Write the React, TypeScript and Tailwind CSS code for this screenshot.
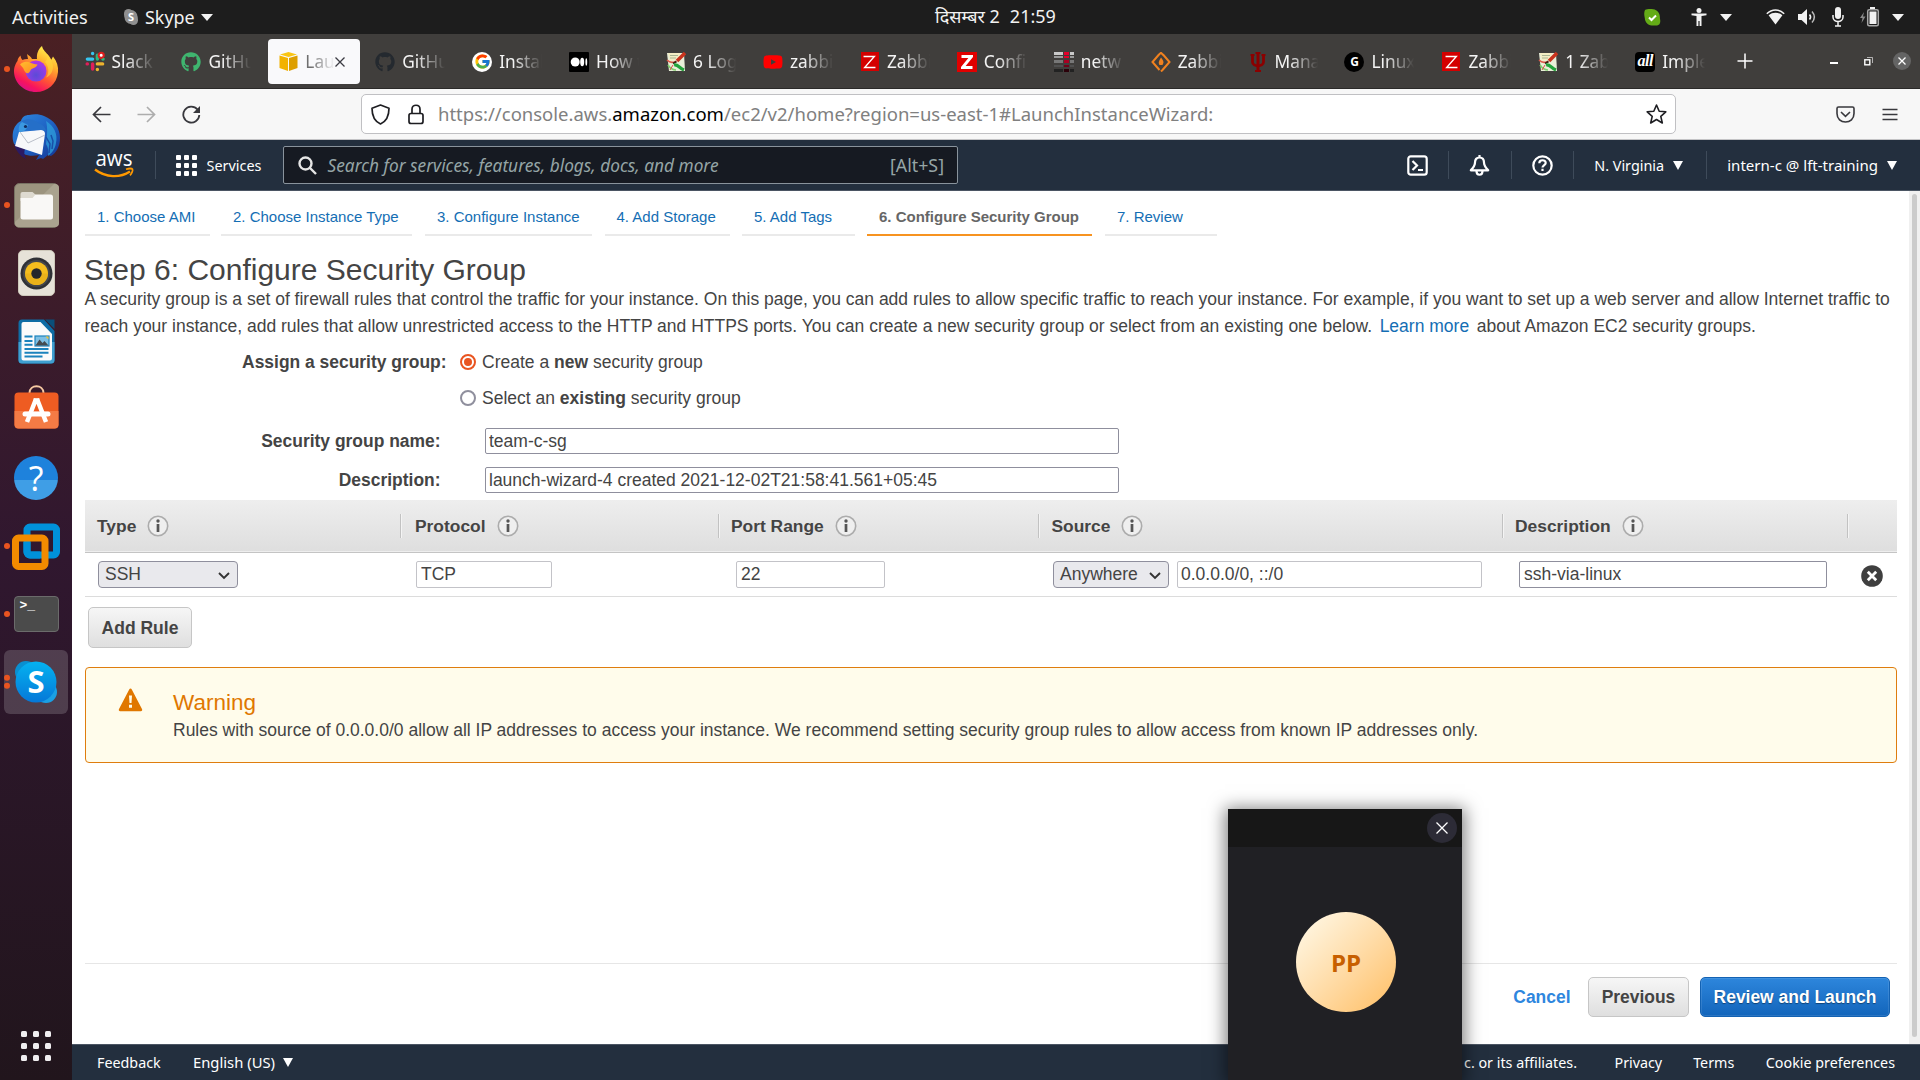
import React from "react";
import { FaGithub, FaYoutube } from "react-icons/fa";
import { FcGoogle } from "react-icons/fc";

type Kids = { children?: React.ReactNode };

/* ---------- shared bits ---------- */

function Caret({ w = 12, h = 7, className = "" }: { w?: number; h?: number; className?: string }) {
  return (
    <svg width={w} height={h} viewBox="0 0 12 7" preserveAspectRatio="none" className={`shrink-0 ${className}`}>
      <path d="M0 0h12L6 7z" fill="currentColor" />
    </svg>
  );
}

/* ---------- GNOME top bar ---------- */

function TopBar() {
  return (
    <header className="grid h-[34px] shrink-0 grid-cols-[935px_1fr_auto] items-center bg-[#1d1d1d] text-[18.2px] leading-[34px] text-[#f2f2f2]">
      <div className="flex items-center pl-3">
        <span className="w-[112px]">Activities</span>
        <svg width="14" height="16" viewBox="0 0 14 16" className="shrink-0">
          <rect x="0" y="0" width="9" height="10" rx="4.5" fill="#8f8f8f" />
          <rect x="5" y="6" width="9" height="10" rx="4.5" fill="#8f8f8f" />
          <rect x="0.5" y="1" width="13" height="14" rx="6.5" fill="#8f8f8f" />
          <text x="7" y="12" textAnchor="middle" fontSize="11" fontWeight="700" fill="#fff" fontFamily="Noto Sans, sans-serif">S</text>
        </svg>
        <span className="ml-[7px] text-[17.900px]">Skype</span>
        <Caret className="ml-[6px]" />
      </div>
      <div className="flex -translate-y-px gap-[10px] whitespace-pre text-[18px]">
        <span>दिसम्बर 2</span>
        <span>21:59</span>
      </div>
      <div className="flex items-center pr-4">
        <svg width="17" height="17" viewBox="0 0 17 17">
          <path d="M1 1C3.500-.2 9-.2 12 1.200c3.500 1.800 4 5.300 4 8.800.5 2 .4 4-.8 5.500-2 1.500-5 1-7.500 1C3.500 16 1 13 .8 9 0 6 0 3 1 1z" fill="#64ab17" />
          <path d="M5 8.500l2.500 2.500 4.500-4.500" fill="none" stroke="#fff" strokeWidth="2" />
        </svg>
        <svg width="16" height="18" viewBox="0 0 16 18" className="ml-[30px]" fill="#f2f2f2">
          <circle cx="8" cy="2.600" r="2.500" />
          <path d="M.5 5.500h15v1.700L10.500 8v10H8.600v-5H7.400v5H5.500V8L.5 7.200z" />
        </svg>
        <Caret className="ml-[13px]" />
        <svg width="19" height="16" viewBox="0 0 19 16" className="ml-[34px]" fill="none">
          <path d="M.8 4.800C6-.4 13-.4 18.200 4.800" stroke="#f2f2f2" strokeWidth="1.500" />
          <path d="M2.600 6.300C6.500 3 12.500 3 16.400 6.300L9.500 15.500z" fill="#f2f2f2" />
        </svg>
        <svg width="20" height="18" viewBox="0 0 20 18" className="ml-[13px]" fill="none" stroke="#f2f2f2">
          <path d="M0 6h3.500L9 1v16l-5.500-5H0z" fill="#f2f2f2" stroke="none" />
          <path d="M11.500 6.500c1.300 1.500 1.300 3.500 0 5" strokeWidth="1.600" />
          <path d="M14 3.500c3 3.500 3 7.500 0 11" strokeWidth="1.500" opacity=".75" />
        </svg>
        <svg width="12" height="20" viewBox="0 0 12 20" className="ml-[14px]" fill="none" stroke="#f2f2f2">
          <rect x="3" y="0" width="6" height="12" rx="3" fill="#f2f2f2" stroke="none" />
          <path d="M1 8v2c0 6 10 6 10 0V8M6 14.500V19M3 19h6" strokeWidth="1.500" />
        </svg>
        <svg width="20" height="20" viewBox="0 0 20 20" className="ml-[16px]">
          <path d="M4 5L0 11h2.500L1.500 16 5.500 9.500H3z" fill="#8a8a8a" />
          <path d="M10 0h5v2h-5z" fill="#f2f2f2" />
          <rect x="7.700" y="2.700" width="10.600" height="16" rx="1.500" fill="none" stroke="#a8a8a8" strokeWidth="1.500" />
          <rect x="9.500" y="4.500" width="7" height="12.500" fill="#f2f2f2" />
        </svg>
        <Caret className="ml-[12px]" />
      </div>
    </header>
  );
}

/* ---------- Dock ---------- */

function DockSlot({ dots = 0, active = false, children }: Kids & { dots?: number; active?: boolean }) {
  return (
    <div className="relative flex h-[68.1px] w-[72px] items-center justify-center">
      {active && <div className="absolute inset-x-1 inset-y-[2px] rounded-md bg-white/[0.17]" />}
      <div className="absolute left-1 top-1/2 flex -translate-y-1/2 flex-col gap-[2.500px]">
        {Array.from({ length: dots }, (_, i) => (
          <span key={i} className="size-[6px] rounded-full bg-[#e95420]" />
        ))}
      </div>
      <div className="relative flex items-center justify-center">{children}</div>
    </div>
  );
}

function FirefoxIcon() {
  return (
    <svg width="48" height="48" viewBox="0 0 48 48">
      <defs>
        <linearGradient id="ffBody" x1=".8" y1=".05" x2=".3" y2="1">
          <stop offset="0" stopColor="#fff44f" />
          <stop offset=".3" stopColor="#ffb22e" />
          <stop offset=".6" stopColor="#ff5634" />
          <stop offset=".85" stopColor="#f7135f" />
          <stop offset="1" stopColor="#d9108a" />
        </linearGradient>
        <radialGradient id="ffGlobe" cx=".5" cy=".7" r=".7">
          <stop offset="0" stopColor="#5b4bd6" />
          <stop offset=".6" stopColor="#8a3fe6" />
          <stop offset="1" stopColor="#b833e1" />
        </radialGradient>
        <linearGradient id="ffHead" x1="0" y1="0" x2="1" y2="1">
          <stop offset="0" stopColor="#ffbd2e" />
          <stop offset="1" stopColor="#ff8a1f" />
        </linearGradient>
      </defs>
      <path d="M8.500 10.500c.3 2 1 3.500 2 4.500 1.500-.8 3.500-1.200 5.500-1l-1-5c2 1.500 4 3 5 5h5c-.5-5 1-9.500 5-13 1 4.500 4 6 7 10 1 1.300 1.800 2.500 2.300 3.800L41 11.500c4 5 5.500 10 5 15.500C45 39 35.500 47 24 47S2.500 38.500 2 27c-.2-5 2-9 3.500-11 0-2 1.500-4 3-5.500z" fill="url(#ffBody)" />
      <circle cx="24" cy="26" r="10.500" fill="url(#ffGlobe)" />
      <path d="M8 19.500c3-3 7-3.500 11-1.500 2 1 4.500 1 6.500 1.500-1 3-4 3.500-6 4.500-1.500 1-1 3-3 4-2 .8-3.500-.5-4.500-3-.8-2.500-2.500-4-4-5.500z" fill="url(#ffHead)" />
      <path d="M33 17c4 4.500 4.500 11 1 15.500 6-2.500 8.500-9 6-15.500-1-3-3.500-5-5-7 .5 3 0 5-2 7z" fill="#ffd53a" opacity=".65" />
    </svg>
  );
}

function ThunderbirdIcon() {
  return (
    <svg width="48" height="48" viewBox="0 0 48 48">
      <defs>
        <linearGradient id="tbBody" x1="0" y1="0" x2="1" y2="1">
          <stop offset="0" stopColor="#2f8ae0" />
          <stop offset=".5" stopColor="#1f63c4" />
          <stop offset="1" stopColor="#13318f" />
        </linearGradient>
      </defs>
      <path d="M17 2c5-1.500 11-1 15 1 10 4 16 12 16 22 0 9-4 15-9 18l-3-1-5 4-2-1-5 2 3-5c-9 2-17 0-22-6-4-5-5-11-4-17 1-5 4-9 8-11 1-4 4-6 8-6z" fill="url(#tbBody)" />
      <path d="M34 8c8 5 12 13 10 22-1 6-4 10-8 13 1-5 0-9-2-12 1-8 2-15 0-23z" fill="#2fa0dc" opacity=".75" />
      <path d="M34 24l4 7-1 9M39 22l2 6-1 8" stroke="#184fa8" strokeWidth="1.500" fill="none" />
      <path d="M2 31c2 7 6 12 12 15-2-4-2-7-1-10z" fill="#2b1a63" />
      <path d="M7 19l22-2c3 0 4 2 4 4l-3 21L3 33z" fill="#f7f8fa" />
      <path d="M8 19l8 11 17-8" fill="none" stroke="#b9bec8" strokeWidth="1" />
      <path d="M10 8c5-3 11-2 15 1 5 3 8 4 9 9-6-2-11 0-16-1-4 0-6-1-8-3-1-2-1-4 0-6z" fill="#256fc8" />
      <path d="M10 9c-3 2-4 7-3 10 4 0 8-2 9-7z" fill="#3b98e0" />
      <circle cx="13.500" cy="13.500" r="1.600" fill="#122a5f" />
    </svg>
  );
}

function FilesIcon() {
  return (
    <svg width="45" height="45" viewBox="0 0 45 45">
      <rect x=".5" y=".5" width="44" height="44" rx="5" fill="#9c947f" stroke="#787263" />
      <path d="M1 39L40 1h1a4 4 0 014 4v35a4 4 0 01-4 4H5a4 4 0 01-4-4z" fill="#aaa38f" />
      <path d="M6.500 11a2 2 0 012-2h10l3.500 3v6H6.500z" fill="#dedad0" />
      <path d="M6.500 15h12l3-3.500h15a2.500 2.500 0 012.500 2.500v20a2.500 2.500 0 01-2.500 2.500H9A2.500 2.500 0 016.500 34z" fill="#f9f8f6" />
    </svg>
  );
}

function RhythmboxIcon() {
  return (
    <svg width="37" height="46" viewBox="0 0 37 46">
      <rect x=".5" y=".5" width="36" height="45" rx="4.500" fill="#e6e2d8" stroke="#cdc8ba" />
      <circle cx="18.500" cy="23.500" r="16" fill="#2f3136" />
      <circle cx="18.500" cy="23.500" r="13.500" fill="#44474d" />
      <circle cx="18.500" cy="23.500" r="11.500" fill="#f4bd1e" />
      <path d="M7 23.500h23a11.500 11.500 0 01-23 0z" fill="#e0a815" opacity=".5" />
      <circle cx="18.500" cy="23.500" r="5.200" fill="#26272b" />
    </svg>
  );
}

function WriterIcon() {
  return (
    <svg width="37" height="45" viewBox="0 0 37 45">
      <path d="M4 .5h22L36.500 12v29a3.500 3.500 0 01-3.500 3.500H4A3.500 3.500 0 01.5 41V4A3.500 3.500 0 014 .5z" fill="#0f6da5" />
      <path d="M.5 23h36v18a3.500 3.500 0 01-3.500 3.500H4A3.500 3.500 0 01.5 41z" fill="#3f9fd0" />
      <path d="M27 .5h9.500v9.500z" fill="#0a4f7a" />
      <path d="M5.500 3h17L34 15v24.500a2 2 0 01-2 2H5.500a2 2 0 01-2-2V5a2 2 0 012-2z" fill="#fbfbfb" />
      <path d="M6.500 17.500h8M6.500 22h8M6.500 25.800h8M6.500 30h24M6.500 33.800h24M6.500 37.500h18" stroke="#1b83bd" strokeWidth="1.900" />
      <rect x="17" y="17" width="14" height="10" fill="#7ec0e4" stroke="#1b83bd" strokeWidth="1.200" />
      <path d="M17.500 26.500l4-6 3 3.500 2-2 4 4.500z" fill="#444b50" />
      <path d="M27.500 17.500h3v3z" fill="#f6c22d" />
    </svg>
  );
}

function SoftwareIcon() {
  return (
    <svg width="45" height="44" viewBox="0 0 45 44" className="-translate-y-[3px]">
      <path d="M15.500 9V8c0-9 14-9 14 0v1" fill="none" stroke="#f6c9a2" strokeWidth="2" />
      <rect x=".5" y="7.500" width="44" height="36" rx="4" fill="#ee5c22" />
      <path d="M.5 26h44v13.500a4 4 0 01-4 4h-36a4 4 0 01-4-4z" fill="#f47b45" />
      <path d="M22 14L13 37M23 14l9 23" stroke="#fff" strokeWidth="4.500" fill="none" />
      <rect x="8.500" y="26.500" width="28" height="5" rx="2.500" fill="#fff" />
      <path d="M19.700 13.200h5.600v4h-5.600z" fill="#fff" />
    </svg>
  );
}

function HelpIcon() {
  return (
    <div className="flex size-11 items-center justify-center rounded-full bg-gradient-to-b from-[#1e82dc] from-55% to-[#3f9ee6] to-55% font-['Open_Sans',sans-serif] text-[34px] leading-[44px] text-white">
      ?
    </div>
  );
}

function VmwareIcon() {
  return (
    <svg width="48" height="48" viewBox="0 0 48 48" fill="none" strokeWidth="7">
      <rect x="15" y="5" width="29.500" height="28" rx="3" stroke="#0091da" />
      <rect x="3.500" y="16" width="29.500" height="28.500" rx="3" stroke="#f38b00" />
      <path d="M15 20v10a3 3 0 003 3h10" stroke="#0091da" />
    </svg>
  );
}

function TerminalIcon() {
  return (
    <div className="flex h-9 w-[45px] items-start rounded-[4px] border border-[#6b6b6b] bg-[#4b4b4b] pl-[5px] pt-px font-['Liberation_Mono',monospace] text-[13px] font-bold leading-[15px] text-white">
      &gt;_
    </div>
  );
}

function SkypeIcon() {
  return (
    <svg width="44" height="44" viewBox="0 0 44 44">
      <defs>
        <linearGradient id="skBg" x1="0" y1="0" x2="0" y2="1">
          <stop offset="0" stopColor="#05b2f0" />
          <stop offset="1" stopColor="#0578d8" />
        </linearGradient>
      </defs>
      <circle cx="12" cy="12" r="11" fill="#0a8fd0" />
      <circle cx="32" cy="32" r="11" fill="#1aa0e4" />
      <circle cx="22" cy="22" r="20.500" fill="url(#skBg)" />
      <text x="22" y="33" textAnchor="middle" fontSize="31" fontWeight="700" fill="#fff" fontFamily="Noto Sans, sans-serif">S</text>
    </svg>
  );
}

function Dock() {
  return (
    <aside className="flex w-[72px] shrink-0 flex-col items-center bg-gradient-to-b from-[#4a2023] via-[#30172f] via-50% to-[#21151c]">
      <div className="h-px" />
      <DockSlot dots={1}><FirefoxIcon /></DockSlot>
      <DockSlot><ThunderbirdIcon /></DockSlot>
      <DockSlot dots={1}><FilesIcon /></DockSlot>
      <DockSlot><RhythmboxIcon /></DockSlot>
      <DockSlot><WriterIcon /></DockSlot>
      <DockSlot><SoftwareIcon /></DockSlot>
      <DockSlot><HelpIcon /></DockSlot>
      <DockSlot dots={1}><VmwareIcon /></DockSlot>
      <DockSlot dots={1}><TerminalIcon /></DockSlot>
      <DockSlot dots={2} active><SkypeIcon /></DockSlot>
      <div className="mb-[19px] mt-auto grid grid-cols-3 gap-[6px]">
        {Array.from({ length: 9 }, (_, i) => (
          <span key={i} className="size-[6px] rounded-[1.500px] bg-[#f0eef0]" />
        ))}
      </div>
    </aside>
  );
}

/* ---------- Browser tabs ---------- */

function SlackIcon() {
  return (
    <svg width="21" height="21" viewBox="0 0 21 21" strokeWidth="3.600" strokeLinecap="round" fill="none">
      <path d="M8 2v.2M2.500 8H8" stroke="#36c5f0" />
      <path d="M13 4v4M19 8h-.2" stroke="#2eb67d" />
      <path d="M13 13h5.500M13 18.800V19" stroke="#ecb22e" />
      <path d="M8 13v5.500M2.300 13h.2" stroke="#e01e5a" />
      <circle cx="17" cy="4" r="2.700" fill="#fff" stroke="#e01e1e" strokeWidth="2.200" />
    </svg>
  );
}

function CubeIcon() {
  return (
    <svg width="19" height="19" viewBox="0 0 19 19">
      <path d="M9.500 0L18 2.500 9.500 5 1 2.500z" fill="#f9c513" />
      <path d="M.5 3.500L9 6v13L.5 16z" fill="#f2b200" />
      <path d="M18.500 3.500L10 6v13l8.500-3z" fill="#dd9f00" />
    </svg>
  );
}

function MediumIcon() {
  return (
    <svg width="20" height="20" viewBox="0 0 20 20">
      <rect width="20" height="20" rx="1" fill="#000" />
      <circle cx="6.200" cy="10" r="4.500" fill="#fff" />
      <ellipse cx="13.200" cy="10" rx="2" ry="4.200" fill="#fff" />
      <ellipse cx="17.300" cy="10" rx=".9" ry="3.800" fill="#fff" />
    </svg>
  );
}

function HowtoIcon() {
  return (
    <svg width="20" height="20" viewBox="0 0 20 20">
      <path d="M1 1h17l1 18H3z" fill="#e9efd9" />
      <path d="M2 1h12l-1 6-9 2z" fill="#f3edc4" />
      <path d="M4 3.500h8M4 6h6" stroke="#a9b592" strokeWidth="1" />
      <path d="M1 8c3 3 6 3 9 1" stroke="#e05a4a" strokeWidth="1.500" fill="none" />
      <path d="M19 1l-8 8" stroke="#c8331d" strokeWidth="3.500" />
      <path d="M10.500 9.500L7 11.500" stroke="#3b1d10" strokeWidth="2" />
      <path d="M8 13c4-1 5 3 10 5" stroke="#23a33c" strokeWidth="3.200" fill="none" />
      <path d="M2 13c2 3 4 5 8 5" stroke="#7fd06c" strokeWidth="1.600" fill="none" />
      <path d="M4 18l3-5" stroke="#dd4c4c" strokeWidth="1" />
    </svg>
  );
}

function ZabbixIcon({ bold = false }: { bold?: boolean }) {
  return (
    <div className={bold ? "flex size-5 items-center justify-center bg-[#e10000]" : "flex h-[19px] w-[18px] items-center justify-center bg-[#d40000]"}>
      <svg width={bold ? 12 : 13} height="14" viewBox="0 0 12 14" preserveAspectRatio="none" fill="none" stroke="#fff" strokeWidth={bold ? 2.8 : 1.3}>
        <path d="M.5 1.500h10L1.500 12.500h10" />
      </svg>
    </div>
  );
}

function NetworkIcon() {
  return (
    <svg width="20" height="20" viewBox="0 0 20 20">
      <path d="M0 0h9v3H0zM16 0h4v3h-4z" fill="#c9c9c9" />
      <path d="M0 4h9v2H0zM16 4h4v2h-4z" fill="#9a9a9a" />
      <path d="M0 8h9v3H0zM16 8h4v3h-4z" fill="#777" />
      <path d="M0 13h9v2H0zM16 13h4v2h-4z" fill="#505050" />
      <path d="M0 17h9v3H0zM16 17h4v3h-4z" fill="#222" />
      <path d="M10 0h5v3h-5zM10 4h5v2h-5z" fill="#e4002b" />
      <path d="M10 8h5v3h-5z" fill="#a80022" />
      <path d="M10 13h5v2h-5z" fill="#700018" />
      <path d="M10 17h5v3h-5z" fill="#2b0009" />
    </svg>
  );
}

function DiamondIcon() {
  return (
    <svg width="20" height="20" viewBox="0 0 20 20" fill="none" stroke="#f0811f" strokeWidth="2">
      <path d="M8 2.500L1.500 10l7 8M12 2.500L18.500 10l-7 8M8 2.500L10 .8l3 3M11.500 18l-1.500 1.500" />
      <path d="M10 5.500c3 4 3 5 1.500 7.500h-3C7 10.500 8 9 10 5.500z" fill="#f0811f" stroke="none" />
    </svg>
  );
}

function TridentIcon() {
  return (
    <svg width="16" height="20" viewBox="0 0 16 20" fill="none" stroke="#8b0000">
      <path d="M8 1v18" strokeWidth="3" />
      <path d="M2.500 3v7c0 5 11 5 11 0V3" strokeWidth="2.800" />
      <path d="M.5 3h4M11.500 3h4M5.500 1h5M5 19h6" strokeWidth="2" />
    </svg>
  );
}

function GIcon() {
  return <div className="flex size-5 items-center justify-center rounded-full bg-black text-[12px] font-bold leading-5 text-white">G</div>;
}

function AllIcon() {
  return (
    <div className="flex size-5 items-center justify-center rounded-sm bg-black pb-px font-['Liberation_Serif',serif] text-[16px] font-bold italic leading-[18px] tracking-[-0.500px] text-white">
      all
    </div>
  );
}

const tabs: { label: string; icon: React.ReactNode; active?: boolean }[] = [
  { label: "Slack", icon: <SlackIcon /> },
  { label: "GitHu", icon: <FaGithub size={20} color="#3fb56f" /> },
  { label: "Lau", icon: <CubeIcon />, active: true },
  { label: "GitHu", icon: <FaGithub size={20} color="#24292f" /> },
  {
    label: "Instal",
    icon: <span className="flex size-5 items-center justify-center rounded-full bg-white"><FcGoogle size={17} /></span>,
  },
  { label: "How t", icon: <MediumIcon /> },
  { label: "6 Log", icon: <HowtoIcon /> },
  { label: "zabbi", icon: <FaYoutube size={20} color="#ff0000" /> },
  { label: "Zabbi", icon: <ZabbixIcon /> },
  { label: "Confi", icon: <ZabbixIcon bold /> },
  { label: "netw", icon: <NetworkIcon /> },
  { label: "Zabbi", icon: <DiamondIcon /> },
  { label: "Mana", icon: <TridentIcon /> },
  { label: "Linux", icon: <GIcon /> },
  { label: "Zabbi", icon: <ZabbixIcon /> },
  { label: "1 Zab", icon: <HowtoIcon /> },
  { label: "Imple", icon: <AllIcon /> },
];

function TabStrip() {
  return (
    <div className="flex h-[55px] shrink-0 items-center border-b border-[#2b2a29] bg-[#403e3c] text-[17.300px] text-[#f4f4f4]">
      <div className="flex pl-[2.500px]">
        {tabs.map((t, i) => (
          <div key={i} className="flex h-[45px] w-[96.930px] items-center">
            <div
              className={
                t.active
                  ? "flex h-full w-[92px] items-center rounded-[4px] bg-[#f9f9fb] pl-[10px] pt-px text-[#6f6f6f]"
                  : "flex h-full w-full items-center pl-[10px] pt-px"
              }
            >
              <span className="flex w-5 shrink-0 items-center justify-center">{t.icon}</span>
              <span
                className={
                  t.active
                    ? "ml-[7px] w-[30px] whitespace-nowrap [mask-image:linear-gradient(to_right,black_20%,transparent)]"
                    : "ml-[7px] w-[47px] whitespace-nowrap [mask-image:linear-gradient(to_right,black_30%,transparent_92%)]"
                }
              >
                {t.label}
              </span>
              {t.active && (
                <svg width="10" height="10" viewBox="0 0 10 10" className="shrink-0" stroke="#3b3b42" strokeWidth="1.300">
                  <path d="M.5.5l9 9M9.500.5l-9 9" />
                </svg>
              )}
            </div>
          </div>
        ))}
      </div>
      <div className="flex flex-1 items-center">
        <svg width="16" height="16" viewBox="0 0 16 16" className="ml-[14.500px]" stroke="#fff" strokeWidth="1.500">
          <path d="M8 .5v15M.5 8h15" />
        </svg>
        <span className="ml-[77.500px] mt-1 h-[1.500px] w-2 bg-white" />
        <svg width="9" height="9" viewBox="0 0 9 9" className="ml-[26px]" fill="none" stroke="#fff">
          <path d="M3 .5h5.500V6" opacity=".6" />
          <rect x=".8" y="2.800" width="5" height="5" strokeWidth="1.400" />
        </svg>
        <span className="ml-[20px] flex size-[18px] items-center justify-center rounded-full bg-[#646464]">
          <svg width="8" height="8" viewBox="0 0 8 8" stroke="#fff" strokeWidth="1.300">
            <path d="M.5.5l7 7M7.500.5l-7 7" />
          </svg>
        </span>
      </div>
    </div>
  );
}

/* ---------- Browser toolbar ---------- */

function Toolbar() {
  return (
    <div className="flex h-[51px] shrink-0 items-center border-b border-[#c4c4c6] bg-[#f7f7f7] text-[#3a3a3f]">
      <svg width="19" height="17" viewBox="0 0 19 17" className="ml-[20px]" fill="none" stroke="#38383d" strokeWidth="1.700">
        <path d="M9 1L1.500 8.500 9 16M1.500 8.500H18.500" />
      </svg>
      <svg width="19" height="17" viewBox="0 0 19 17" className="ml-[26px]" fill="none" stroke="#adadad" strokeWidth="1.700">
        <path d="M10 1l7.500 7.500L10 16M17.500 8.500H.5" />
      </svg>
      <svg width="19" height="19" viewBox="0 0 19 19" className="ml-[26px]" fill="none" stroke="#38383d" strokeWidth="1.800">
        <path d="M15.500 4.500A8 8 0 1017.300 10" />
        <path d="M18 1v7h-7z" fill="#38383d" stroke="none" />
      </svg>
      <div className="ml-[159.500px] flex h-10 w-[1315px] items-center rounded-[5px] border border-[#c0c0c3] bg-white text-[18.500px] text-[#808080]">
        <svg width="19" height="21" viewBox="0 0 19 21" className="ml-[9.500px]" fill="none" stroke="#1e1e22" strokeWidth="1.700">
          <path d="M9.500 1L18 4.200C18 11 16 17 9.500 20 3 17 1 11 1 4.200z" strokeLinejoin="round" />
        </svg>
        <svg width="16" height="21" viewBox="0 0 16 21" className="ml-[18px]" fill="none" stroke="#1e1e22" strokeWidth="1.700">
          <rect x="1" y="9.500" width="14" height="10" rx="2" />
          <path d="M4 9.500V5.200c0-5.300 8-5.300 8 0v4.300" />
        </svg>
        <span className="ml-[14px] whitespace-nowrap">
          https://console.aws.<span className="text-black">amazon.com</span>/ec2/v2/home?region=us-east-1#LaunchInstanceWizard:
        </span>
        <svg width="21" height="21" viewBox="0 0 21 21" className="ml-auto mr-[7.500px]" fill="none" stroke="#1e1e22" strokeWidth="1.600" strokeLinejoin="round">
          <path d="M10.500 1l2.700 6.200 6.600.6-5 4.500 1.500 6.700-5.800-3.500L4.700 19l1.500-6.700-5-4.500 6.600-.6z" />
        </svg>
      </div>
      <svg width="19" height="17" viewBox="0 0 19 17" className="ml-[160px]" fill="none" stroke="#38383d" strokeWidth="1.600">
        <path d="M2.500 1h14a1.500 1.500 0 011.500 1.500V7.500C18 13 14 16 9.500 16S1 13 1 7.500V2.500A1.500 1.500 0 012.500 1z" />
        <path d="M5 6l4.500 4.300L14 6" />
      </svg>
      <svg width="16" height="13" viewBox="0 0 16 13" className="ml-[27.500px]" stroke="#38383d" strokeWidth="1.500">
        <path d="M.5 1.500h15M.5 6.500h15M.5 11.500h15" />
      </svg>
    </div>
  );
}

/* ---------- AWS navigation ---------- */

function NavDivider({ className = "" }: { className?: string }) {
  return <span className={`h-7 w-px shrink-0 bg-[#3e4b5a] ${className}`} />;
}

function AwsNav() {
  return (
    <nav className="flex h-[51px] shrink-0 items-center border-b border-[#4b5563] bg-[#232f3e] text-[14.400px] text-white">
      <svg width="40" height="30" viewBox="0 0 40 30" className="ml-[22px] mt-px">
        <text x="20" y="14.500" textAnchor="middle" textLength="37" lengthAdjust="spacingAndGlyphs" fontSize="22" fontWeight="500" fill="#fff" fontFamily="Open Sans, sans-serif">aws</text>
        <path d="M1 18.500c11 8.500 25 8.500 35 2" fill="none" stroke="#ff9900" strokeWidth="2.400" />
        <path d="M32 18.300c3-1 6-.8 6.500 0 .5 1-.5 4-2.500 6" fill="none" stroke="#ff9900" strokeWidth="1.700" />
      </svg>
      <NavDivider className="ml-[21px]" />
      <div className="ml-5 grid grid-cols-3 gap-[3px]">
        {Array.from({ length: 9 }, (_, i) => (
          <span key={i} className="size-[5px] rounded-[1px] bg-white" />
        ))}
      </div>
      <span className="ml-[9.500px] mt-px w-[55px]">Services</span>
      <div className="ml-[21.500px] flex h-[38px] w-[675px] items-center rounded-[2px] border border-[#89939c] bg-[#161a22] pl-[13.500px] pr-[13px] text-[17.300px] text-[#95a5a6]">
        <svg width="19" height="19" viewBox="0 0 19 19" fill="none" stroke="#e6e6e6" strokeWidth="2.400">
          <circle cx="7.500" cy="7.500" r="6" />
          <path d="M12 12l6 6" />
        </svg>
        <span className="ml-[11px] mt-[2px] whitespace-nowrap italic">Search for services, features, blogs, docs, and more</span>
        <span className="ml-auto mt-px text-[17.800px]">[Alt+S]</span>
      </div>
      <div className="ml-auto flex items-center">
        <svg width="21" height="21" viewBox="0 0 21 21" fill="none" stroke="#fff" strokeWidth="2.200">
          <rect x="1.300" y="1.300" width="18.400" height="18.400" rx="2.500" />
          <path d="M5.500 6l4.500 4.500L5.500 15M11 15h5" />
        </svg>
        <NavDivider className="ml-[20px]" />
        <svg width="21" height="21" viewBox="0 0 21 21" className="ml-[20.500px]" fill="none" stroke="#fff" strokeWidth="2.200" strokeLinejoin="round">
          <path d="M10.500 2.500c-3 0-4.500 2.200-4.500 5C6 11 4 13 1.800 15.300h17.400C17 13 15 11 15 7.500c0-2.800-1.500-5-4.500-5zM10.500 0v2.500" />
          <path d="M7.500 16c0 5 6 5 6 0" />
        </svg>
        <NavDivider className="ml-[20.500px]" />
        <svg width="21" height="21" viewBox="0 0 21 21" className="ml-[20px]" fill="none" stroke="#fff" strokeWidth="2.200">
          <circle cx="10.500" cy="10.500" r="9.200" />
          <path d="M7.300 8.300c0-4 6.400-4 6.400-.3 0 2-3.200 2.200-3.200 4.600M10.500 13.800v2.300" />
        </svg>
        <NavDivider className="ml-[20.500px]" />
        <span className="ml-[20px] mt-px w-[71px] whitespace-nowrap">N. Virginia</span>
        <Caret w={10} h={9} className="ml-[8px]" />
        <NavDivider className="ml-[22.500px]" />
        <span className="ml-[20.500px] mt-px whitespace-nowrap text-[15.050px]">intern-c @ lft-training</span>
        <Caret w={10} h={9} className="ml-[8.500px] mr-[23.500px]" />
      </div>
    </nav>
  );
}

/* ---------- Wizard ---------- */

function WizardSteps() {
  const base = "flex h-[45px] items-center border-b-2 border-[#eaeaea] pt-[9px] pl-3 text-[#146eb4]";
  return (
    <ol className="flex whitespace-nowrap text-[15px]">
      <li className={`${base} w-[124.500px]`}>1. Choose AMI</li>
      <li className={`${base} ml-[11.500px] w-[191px]`}>2. Choose Instance Type</li>
      <li className={`${base} ml-[13px] w-[167px]`}>3. Configure Instance</li>
      <li className={`${base} ml-[12.500px] w-[125.500px]`}>4. Add Storage</li>
      <li className={`${base} ml-[12px] w-[113px]`}>5. Add Tags</li>
      <li className="ml-[12px] flex h-[45px] w-[225px] items-center border-b-2 border-[#f79320] pl-3 pt-[9px] font-bold text-[#666]">
        6. Configure Security Group
      </li>
      <li className={`${base} ml-[13px] w-[112px]`}>7. Review</li>
    </ol>
  );
}

function Radio({ checked }: { checked?: boolean }) {
  return (
    <span
      className={
        checked
          ? "flex size-4 items-center justify-center rounded-full border-2 border-[#e95420]"
          : "flex size-4 rounded-full border-2 border-[#8f8f9d]"
      }
    >
      {checked && <span className="size-2 rounded-full bg-[#e95420]" />}
    </span>
  );
}

function InfoDot() {
  return (
    <svg width="22" height="22" viewBox="0 0 22 22" className="ml-[11px]">
      <circle cx="11" cy="11" r="9.700" fill="#efefef" stroke="#acacac" strokeWidth="1.600" />
      <path d="M11 9v8" stroke="#555" strokeWidth="2.700" />
      <circle cx="11" cy="6" r="1.700" fill="#555" />
    </svg>
  );
}

function HeadCell({ children, className }: Kids & { className: string }) {
  return <div className={`flex items-center ${className}`}>{children}</div>;
}

function HeadRule() {
  return <span className="h-6 w-[2px] border-l border-[#c2c2c2] bg-[#f4f4f4]" />;
}

function SelectBox({ children, className }: Kids & { className: string }) {
  return (
    <div className={`flex h-[27px] items-center justify-between rounded-[4px] border border-[#8f8f9d] bg-[#e9e9ed] pl-[6px] pr-[7px] ${className}`}>
      <span>{children}</span>
      <svg width="12" height="8" viewBox="0 0 12 8" fill="none" stroke="#333" strokeWidth="1.900" className="mt-[2px]">
        <path d="M1 1l5 5 5-5" />
      </svg>
    </div>
  );
}

function TextBox({ value, className }: { value: string; className: string }) {
  return <input readOnly defaultValue={value} className={`rounded-[2px] border bg-white outline-none ${className}`} />;
}

function RulesTable() {
  return (
    <section className="mt-[7px]">
      <div className="flex h-[53px] items-center border-b border-[#c4c4c4] bg-gradient-to-b from-[#eee] to-[#dedede] text-[17.400px] font-bold shadow-[inset_0_-1px_0_#eee]">
        <HeadCell className="w-[315px] pl-3">Type<InfoDot /></HeadCell>
        <HeadRule />
        <HeadCell className="w-[315.500px] pl-[13px]">Protocol<InfoDot /></HeadCell>
        <HeadRule />
        <HeadCell className="w-[318px] pl-[11.500px]">Port Range<InfoDot /></HeadCell>
        <HeadRule />
        <HeadCell className="w-[462px] pl-[12px]">Source<InfoDot /></HeadCell>
        <HeadRule />
        <HeadCell className="w-[343.500px] pl-[11.500px]">Description<InfoDot /></HeadCell>
        <HeadRule />
      </div>
      <div className="flex h-11 items-center border-b border-[#dcdcdc]">
        <SelectBox className="ml-[13px] w-[140px]">SSH</SelectBox>
        <TextBox value="TCP" className="ml-[178px] h-[27px] w-[136px] border-[#c3c3c8] pl-1" />
        <TextBox value="22" className="ml-[184px] h-[27px] w-[149px] border-[#c3c3c8] pl-1" />
        <SelectBox className="ml-[168px] w-[116px]">Anywhere</SelectBox>
        <TextBox value="0.0.0.0/0, ::/0" className="ml-2 h-[27px] w-[305px] border-[#c3c3c8] pl-[3px]" />
        <TextBox value="ssh-via-linux" className="ml-[37px] h-[27px] w-[308px] border-[#8f8f9d] pl-1" />
        <svg width="22" height="22" viewBox="0 0 22 22" className="ml-[34px] mt-[2px]">
          <circle cx="11" cy="11" r="10.800" fill="#3f3f3f" />
          <path d="M6.800 6.800l8.400 8.400M15.200 6.800l-8.400 8.400" stroke="#fff" strokeWidth="2.800" />
        </svg>
      </div>
    </section>
  );
}

const greyButton =
  "flex items-center justify-center rounded-[5px] border border-[#c6c6c6] bg-gradient-to-b from-[#f6f6f6] to-[#dfdfdf] font-bold text-[#444]";

function Wizard() {
  return (
    <main className="flex w-[1837px] shrink-0 flex-col bg-white pl-[13px] pr-3 font-['Liberation_Sans',Arial,sans-serif] text-[17.500px] text-[#444]">
      <WizardSteps />
      <h1 className="-ml-px mt-4 text-[30px] leading-9">Step 6: Configure Security Group</h1>
      <p className="-ml-[0.500px] -mt-[2px] whitespace-nowrap text-[17.510px] leading-[27px]">
        A security group is a set of firewall rules that control the traffic for your instance. On this page, you can add rules to allow specific traffic to reach your instance. For example, if you want to set up a web server and allow Internet traffic to
        <br />
        reach your instance, add rules that allow unrestricted access to the HTTP and HTTPS ports. You can create a new security group or select from an existing one below.{" "}
        <a className="mx-[2.700px] text-[#146eb4]">Learn more</a> about Amazon EC2 security groups.
      </p>
      <div className="mt-1 flex h-9 items-center">
        <span className="w-[361.500px] text-right text-[17.450px] font-bold">Assign a security group:</span>
        <span className="ml-[13.500px]"><Radio checked /></span>
        <span className="ml-[6px]">Create a <b>new</b> security group</span>
      </div>
      <div className="flex h-9 items-center pl-[375px]">
        <Radio />
        <span className="ml-[6px]">Select an <b>existing</b> security group</span>
      </div>
      <div className="mt-3 flex h-[26px] items-center">
        <label className="mr-[44.500px] w-[355.500px] text-right text-[17.450px] font-bold">Security group name:</label>
        <TextBox value="team-c-sg" className="h-[26px] w-[634px] border-[#8f8f9d] pl-[3px]" />
      </div>
      <div className="mt-[13px] flex h-[26px] items-center">
        <label className="mr-[44.500px] w-[355.500px] text-right text-[17.450px] font-bold">Description:</label>
        <TextBox value="launch-wizard-4 created 2021-12-02T21:58:41.561+05:45" className="h-[26px] w-[634px] border-[#8f8f9d] pl-[3px]" />
      </div>
      <RulesTable />
      <button className={`${greyButton} ml-[3px] mt-[10px] h-[41px] w-[104px] pt-px`}>Add Rule</button>
      <section className="mt-[19px] flex h-24 rounded-[4px] border border-[#df7d0e] bg-[#fffceb]">
        <svg width="25" height="24" viewBox="0 0 25 24" className="ml-[32px] mt-[20px]">
          <path d="M11.200 1.500c.6-1.200 2-1.200 2.600 0l10.300 19.800c.4 1-.1 1.900-1.200 1.900H2.100c-1.100 0-1.600-.9-1.200-1.900z" fill="#e07700" />
          <path d="M11 7.500h3l-.5 7.500h-2zM11 16.800h3v3h-3z" fill="#fffceb" />
        </svg>
        <div className="ml-[30px] pt-[21px]">
          <h2 className="text-[22.500px] leading-7 text-[#e07700]">Warning</h2>
          <p className="mt-px leading-6">
            Rules with source of 0.0.0.0/0 allow all IP addresses to access your instance. We recommend setting security group rules to allow access from known IP addresses only.
          </p>
        </div>
      </section>
      <div className="mt-auto flex h-[81px] justify-end border-t border-[#e6e6e6] pr-[7px] pt-[13px] text-[17.450px] font-bold">
        <a className="mr-[17.500px] leading-[40px] text-[#2e86de]">Cancel</a>
        <button className={`${greyButton} h-10 w-[101px]`}>Previous</button>
        <button className="ml-[11px] flex h-10 w-[190px] items-center justify-center rounded-[5px] border border-[#1362b3] bg-gradient-to-b from-[#2d86dc] to-[#1265bb] text-white shadow-[inset_0_0_0_1px_rgba(255,255,255,0.1)] [text-shadow:0_1px_1px_rgba(0,0,0,0.4)]">
          Review and Launch
        </button>
      </div>
    </main>
  );
}

function AwsFooter() {
  return (
    <footer className="flex h-9 shrink-0 items-center border-t border-[#4b5563] bg-[#232f3e] pl-[25px] pr-[25px] text-[14.300px] text-white">
      <span className="w-24">Feedback</span>
      <span className="text-[14.800px]">English (US)</span>
      <Caret w={10} h={9} className="ml-[8px]" />
      <span className="ml-auto">c. or its affiliates.</span>
      <span className="ml-[37.500px]">Privacy</span>
      <span className="ml-[31px]">Terms</span>
      <span className="ml-[31.500px]">Cookie preferences</span>
    </footer>
  );
}

/* ---------- Floating call window ---------- */

function CallWindow() {
  return (
    <div className="absolute bottom-0 left-[1228px] flex h-[271px] w-[234px] flex-col bg-[#202024] shadow-[0_2px_16px_3px_rgba(0,0,0,0.5)]">
      <div className="flex h-[38px] items-center justify-end bg-[#171717] pr-[5px]">
        <span className="flex size-[30px] items-center justify-center rounded-full bg-[#2c2b36]">
          <svg width="12" height="12" viewBox="0 0 12 12" stroke="#fff" strokeWidth="1.300">
            <path d="M.5.5l11 11M11.500.5l-11 11" />
          </svg>
        </span>
      </div>
      <div className="ml-[68px] mt-[65px] flex size-[100px] items-center justify-center rounded-full bg-gradient-to-br from-[#fff5df] from-10% to-[#ffc470] to-90% pt-[2px] font-['Open_Sans',sans-serif] text-[24px] font-bold text-[#c75f00]">
        PP
      </div>
    </div>
  );
}

export default function App() {
  return (
    <div className="relative flex h-[1080px] w-[1920px] flex-col overflow-hidden bg-white font-['Noto_Sans','Open_Sans',sans-serif]">
      <TopBar />
      <div className="flex min-h-0 flex-1">
        <Dock />
        <div className="flex min-w-0 flex-1 flex-col">
          <TabStrip />
          <Toolbar />
          <AwsNav />
          <div className="flex min-h-0 flex-1">
            <Wizard />
            <div className="flex flex-1 justify-center bg-[#f0f0f0] pt-[3px]">
              <span className="h-[843px] w-[5px] rounded-full bg-[#cbcbcb]" />
            </div>
          </div>
          <AwsFooter />
        </div>
      </div>
      <CallWindow />
    </div>
  );
}
